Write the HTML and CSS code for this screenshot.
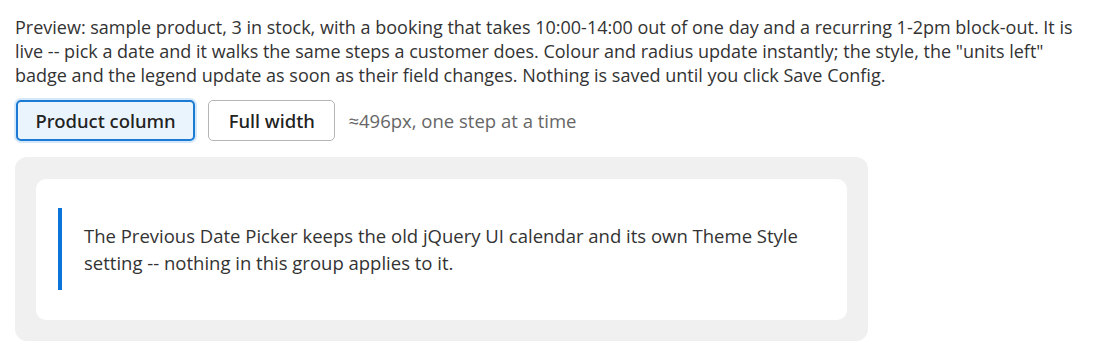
FILE: index.html
```html
<!DOCTYPE html>
<html>
<head>
<meta charset="utf-8">
<link rel="stylesheet" href="styles.css">
</head>
<body>
<div class="page">
  <p class="intro">Preview: sample product, 3 in stock, with a booking that takes 10:00-14:00 out of one day and a recurring 1-2pm block-out. It is live -- pick a date and it walks the same steps a customer does. Colour and radius update instantly; the style, the "units left" badge and the legend update as soon as their field changes. Nothing is saved until you click Save Config.</p>
  <div class="toolbar">
    <button class="btn btn-active">Product column</button>
    <button class="btn">Full width</button>
    <span class="hint">≈496px, one step at a time</span>
  </div>
  <div class="stage">
    <div class="card">
      <div class="note">The Previous Date Picker keeps the old jQuery UI calendar and its own Theme Style setting -- nothing in this group applies to it.</div>
    </div>
  </div>
</div>
</body>
</html>
```

FILE: styles.css
```css
html, body {
  margin: 0;
  padding: 0;
  background: #ffffff;
}
.page {
  padding: 15px 15px 8px;
  font-family: "Open Sans", "Liberation Sans", sans-serif;
  color: #333333;
}
.intro {
  margin: 0;
  font-size: 18px;
  line-height: 24px;
  width: 1080px;
}
.toolbar {
  display: flex;
  align-items: center;
  gap: 13px;
  margin-top: 13px;
  padding-left: 1px;
}
.btn {
  font-family: "Noto Sans", "Open Sans", sans-serif;
  font-size: 18.5px;
  font-weight: 500;
  color: #222222;
  background: #ffffff;
  border: 1px solid #b5b5b5;
  border-radius: 5px;
  height: 41px;
  padding: 0 19.5px;
  cursor: pointer;
}
.btn-active {
  background: #eaf4fd;
  border: 2px solid #1a7ad4;
  box-shadow: 0 0 0 2px #d4e8fa;
  padding: 0 17.5px;
}
.hint {
  font-size: 18.5px;
  color: #666666;
}
.stage {
  margin-top: 16px;
  width: 853px;
  box-sizing: border-box;
  background: #f0f0f0;
  border-radius: 12px;
  padding: 22px 21px 21px;
}
.card {
  background: #ffffff;
  border-radius: 10px;
  padding: 29px 22px 30px;
}
.note {
  border-left: 4px solid #0a74da;
  padding: 14px 0 14px 22px;
  font-size: 18.5px;
  line-height: 27px;
  color: #333333;
}
```
